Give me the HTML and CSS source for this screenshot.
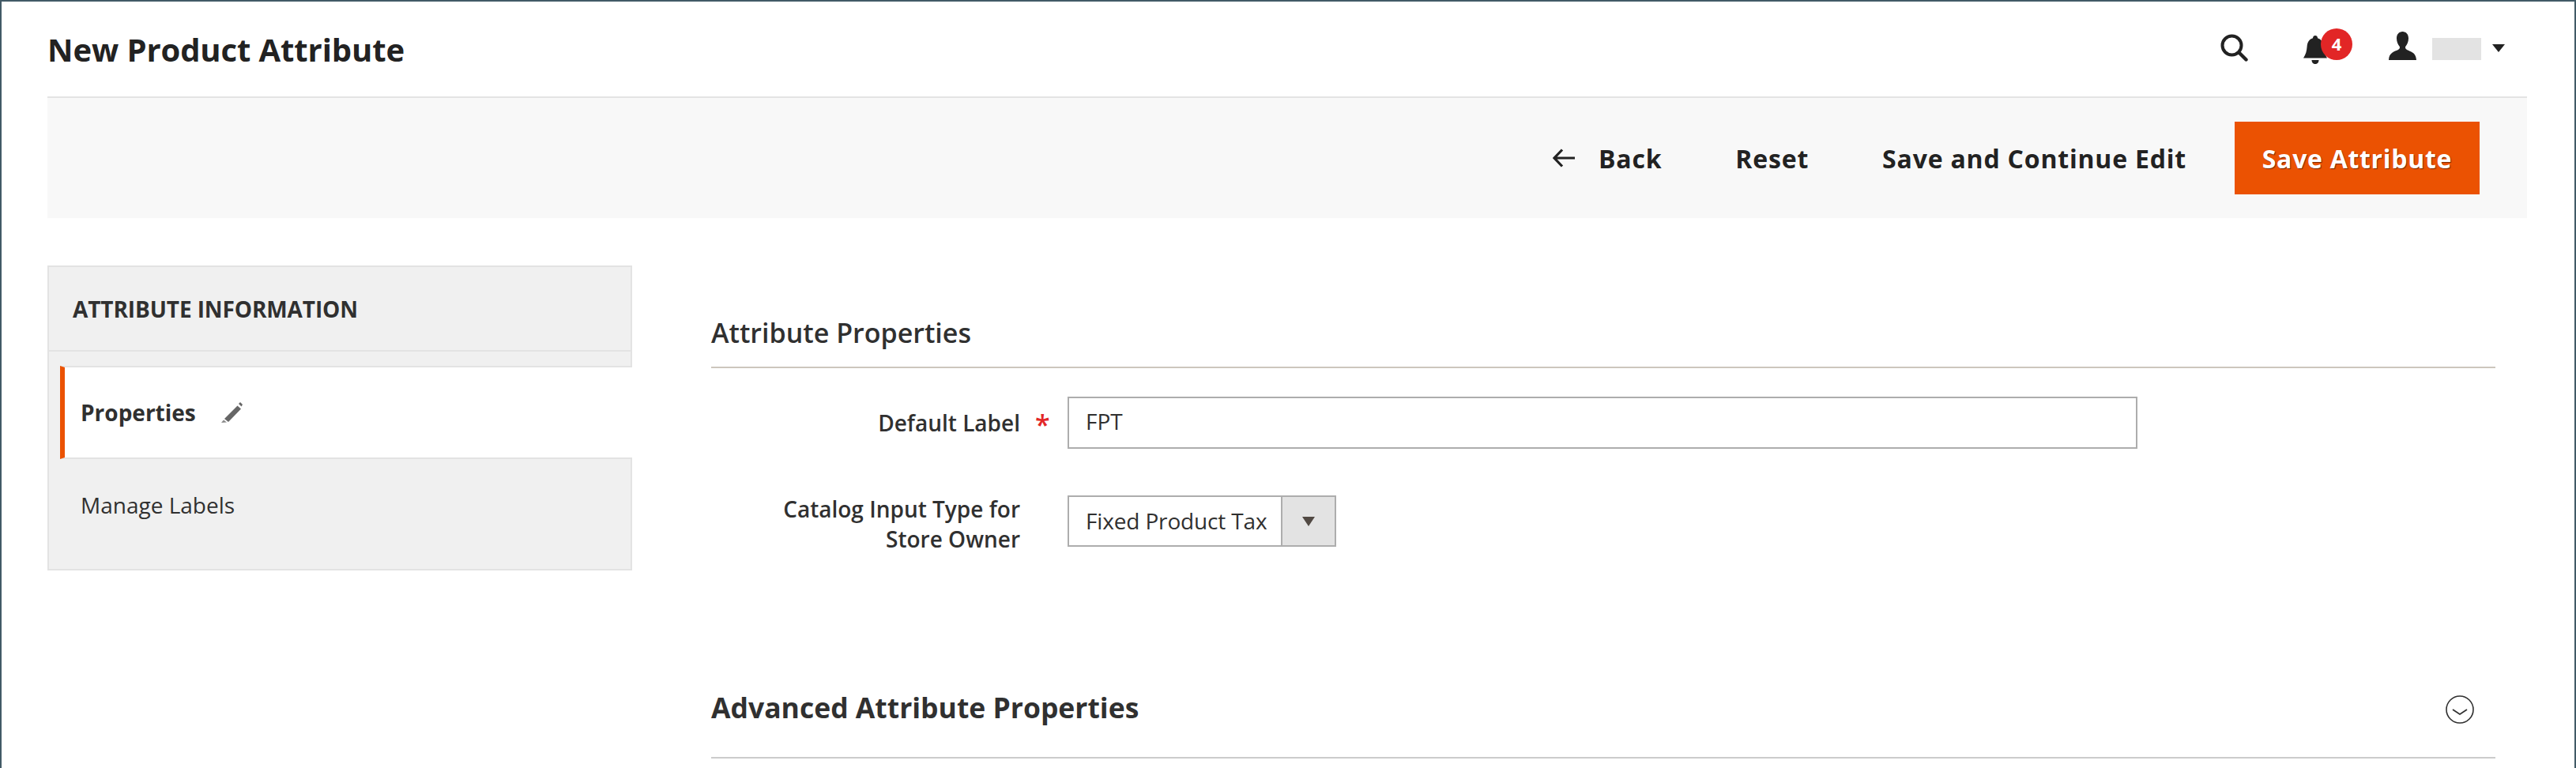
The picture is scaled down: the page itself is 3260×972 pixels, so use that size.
FILE: index.html
```html
<!DOCTYPE html>
<html lang="en">
<head>
    <meta charset="UTF-8">
    <title>New Product Attribute</title>
    <link rel="stylesheet" href="styles.css">
</head>
<body>
    <div class="frame">
        <header class="page-header">
            <h1>New Product Attribute</h1>
            <div class="header-actions">
                <svg class="icon-search" viewBox="0 0 35 35"><circle cx="14.5" cy="14.5" r="12" fill="none" stroke="#222" stroke-width="4"/><path d="M23.5 23.5 L32.5 32.5" stroke="#222" stroke-width="4.4" stroke-linecap="round"/></svg>
                <div class="bell">
                    <svg class="icon-bell" viewBox="0 0 30 36"><path d="M15 0c2 0 3 1.300 3 3.200 5 1.500 7 5.500 7.400 10.800.4 5.500 1.600 10 4.600 14.500H0c3-4.500 4.200-9 4.600-14.500C5 8.700 7 4.700 12 3.200 12 1.300 13 0 15 0z" fill="#222"/><path d="M10.500 31h9c0 3-2 5-4.500 5s-4.500-2-4.500-5z" fill="#222"/></svg>
                    <span class="badge">4</span>
                </div>
                <svg class="icon-user" viewBox="0 0 35 36"><path d="M17.500 0c4.500 0 7.500 3.500 7.500 8.500 0 4-1.500 8-3.800 10.500-.6 1.700.2 3.300 2.300 4.300 5 2 11 3.500 11.500 12.700H0c.5-9.200 6.500-10.700 11.500-12.700 2.100-1 2.900-2.600 2.300-4.300C11.500 16.500 10 12.500 10 8.500 10 3.500 13 0 17.500 0z" fill="#222"/></svg>
                <span class="user-name"></span>
                <span class="caret"></span>
            </div>
        </header>

        <div class="toolbar">
            <a class="tool-link tool-back" href="#">
                <svg class="icon-back" viewBox="0 0 28 24"><path d="M12 1.500 L2 12 L12 22.500 M2.500 12 H28" fill="none" stroke="#222" stroke-width="3.200"/></svg>
                Back
            </a>
            <a class="tool-link" href="#">Reset</a>
            <a class="tool-link tool-continue" href="#">Save and Continue Edit</a>
            <button class="btn-save">Save Attribute</button>
        </div>

        <main class="content">
            <aside class="side-panel">
                <div class="side-title">ATTRIBUTE INFORMATION</div>
                <div class="side-item active">
                    Properties
                    <svg class="icon-pencil" viewBox="0 0 27 26"><path d="M20.500 4.500 L25 8.500 L9 25 L4 21z" fill="#666"/><path d="M22 2 L24 0 L27 3 L25.500 5.500z" fill="#666"/><path d="M3 22.500 L7 25.500 L0 26z" fill="#888"/></svg>
                </div>
                <div class="side-item">Manage Labels</div>
            </aside>

            <section class="form-area">
                <h2 class="section-title">Attribute Properties</h2>
                <div class="field">
                    <label class="field-label required">Default Label</label>
                    <div class="text-input">FPT</div>
                </div>
                <div class="field">
                    <label class="field-label">Catalog Input Type for<br>Store Owner</label>
                    <div class="select-input">
                        <span class="select-value">Fixed Product Tax</span>
                        <span class="select-addon"><span class="select-arrow"></span></span>
                    </div>
                </div>
                <div class="section-collapsed">
                    <h2>Advanced Attribute Properties</h2>
                    <svg class="icon-expand" viewBox="0 0 36 36"><circle cx="18" cy="18" r="17" fill="none" stroke="#303030" stroke-width="1.600"/><path d="M9 18 L18 24 L27 18" fill="none" stroke="#303030" stroke-width="1.800"/></svg>
                </div>
            </section>
        </main>
    </div>
</body>
</html>
```

FILE: styles.css
```css
html, body {
    margin: 0;
    padding: 0;
    height: 972px;
    overflow: hidden;
}

body {
    font-family: 'Open Sans', sans-serif;
    font-size: 28px;
    color: #303030;
    background-color: #ffffff;
}

.frame {
    height: 972px;
    box-sizing: border-box;
    border-top: 2px solid #425a66;
    border-left: 2px solid #425a66;
    border-right: 2px solid #425a66;
    padding-left: 58px;
    padding-right: 60px;
    overflow: hidden;
}

.page-header {
    height: 120px;
    display: flex;
    align-items: flex-start;
    justify-content: space-between;
}

h1 {
    margin: 34px 0 0 0;
    font-size: 40px;
    line-height: 54px;
    font-weight: 700;
    letter-spacing: -0.1px;
    color: #222222;
}

.header-actions {
    display: flex;
    align-items: flex-start;
    margin-right: 28px;
}

.icon-search {
    width: 35px;
    height: 35px;
    margin-top: 41px;
}

.bell {
    position: relative;
    width: 30px;
    height: 36px;
    margin-top: 43px;
    margin-left: 70px;
    margin-right: 78px;
}

.icon-bell {
    display: block;
    width: 30px;
    height: 36px;
}

.badge {
    position: absolute;
    left: 22px;
    top: -9px;
    width: 40px;
    height: 40px;
    border-radius: 50%;
    background-color: #e22626;
    color: #ffffff;
    font-size: 22px;
    line-height: 38px;
    font-weight: 700;
    text-align: center;
}

.icon-user {
    width: 35px;
    height: 36px;
    margin-top: 38px;
}

.user-name {
    width: 62px;
    height: 28px;
    margin-top: 46px;
    margin-left: 20px;
    background-color: #e3e3e3;
}

.caret {
    margin-top: 54px;
    margin-left: 14px;
    border-top: 10px solid #222222;
    border-left: 8px solid transparent;
    border-right: 8px solid transparent;
}

.toolbar {
    height: 152px;
    border-top: 2px solid #e3e3e3;
    background-color: #f8f8f8;
    display: flex;
    align-items: center;
    justify-content: flex-end;
    padding-right: 60px;
}

.tool-link {
    display: flex;
    align-items: center;
    font-size: 32px;
    font-weight: 700;
    letter-spacing: 0.8px;
    color: #222222;
    text-decoration: none;
    margin-right: 93px;
}

.tool-continue {
    margin-right: 61px;
}

.icon-back {
    width: 28px;
    height: 24px;
    margin-right: 30px;
}

.btn-save {
    width: 310px;
    height: 92px;
    border: none;
    background-color: #eb5202;
    color: #ffffff;
    font-family: inherit;
    font-size: 32px;
    font-weight: 700;
    letter-spacing: 0.7px;
    text-shadow: 1px 1px 1px rgba(0, 0, 0, 0.5);
    padding: 0;
}

.content {
    display: flex;
    margin-top: 60px;
    margin-right: 40px;
}

.side-panel {
    width: 740px;
    height: 386px;
    flex-shrink: 0;
    box-sizing: border-box;
    border: 2px solid #e3e3e3;
    background-color: #f0f0f0;
    margin-right: 100px;
}

.side-title {
    height: 107px;
    box-sizing: border-box;
    padding: 34px 0 0 30px;
    line-height: 38px;
    font-weight: 700;
    letter-spacing: -0.1px;
    color: #303030;
    border-bottom: 2px solid #e3e3e3;
}

.side-item {
    padding-left: 40px;
    height: 100px;
    line-height: 116px;
    color: #303030;
}

.side-item.active {
    display: flex;
    align-items: center;
    height: 118px;
    box-sizing: border-box;
    margin-top: 18px;
    margin-right: -2px;
    margin-left: 14px;
    padding-left: 20px;
    background-color: #ffffff;
    border-top: 2px solid #e3e3e3;
    border-bottom: 2px solid #e3e3e3;
    border-left: 6px solid #eb5202;
    font-weight: 700;
    line-height: 38px;
}

.icon-pencil {
    width: 27px;
    height: 26px;
    margin-left: 32px;
}

.form-area {
    flex: 1;
    min-width: 0;
}

.section-title {
    margin: 63px 0 0 0;
    padding-bottom: 21px;
    font-size: 34px;
    line-height: 44px;
    font-weight: 600;
    color: #303030;
    border-bottom: 2px solid #cdc6bd;
}

.field {
    display: flex;
    align-items: center;
    margin-top: 36px;
}

.field + .field {
    margin-top: 57px;
    align-items: flex-start;
}

.field-label {
    width: 391px;
    flex-shrink: 0;
    text-align: right;
    font-weight: 600;
    line-height: 38px;
    margin-right: 60px;
    position: relative;
}

.field-label.required::after {
    content: "*";
    position: absolute;
    left: 410px;
    top: 2px;
    color: #e22626;
    font-size: 34px;
}

.text-input {
    width: 1354px;
    height: 66px;
    box-sizing: border-box;
    border: 2px solid #adadad;
    padding-left: 21px;
    line-height: 58px;
    color: #303030;
}

.select-input {
    width: 340px;
    height: 65px;
    margin-top: 2px;
    box-sizing: border-box;
    border: 2px solid #adadad;
    display: flex;
}

.select-value {
    flex: 1;
    padding-left: 21px;
    line-height: 60px;
    letter-spacing: -0.15px;
}

.select-addon {
    width: 66px;
    border-left: 2px solid #adadad;
    background-color: #e3e3e3;
    display: flex;
    align-items: center;
    justify-content: center;
}

.select-arrow {
    border-top: 12px solid #514943;
    border-left: 8px solid transparent;
    border-right: 8px solid transparent;
}

.section-collapsed {
    display: flex;
    align-items: center;
    justify-content: space-between;
    margin-top: 149px;
    height: 110px;
    box-sizing: border-box;
    padding-bottom: 18px;
    border-bottom: 2px solid #cccccc;
}

.section-collapsed h2 {
    margin: 0;
    font-size: 35.5px;
    font-weight: 700;
    line-height: 46px;
    color: #303030;
}

.icon-expand {
    width: 36px;
    height: 36px;
    margin-top: 6px;
    margin-right: 27px;
}
```
